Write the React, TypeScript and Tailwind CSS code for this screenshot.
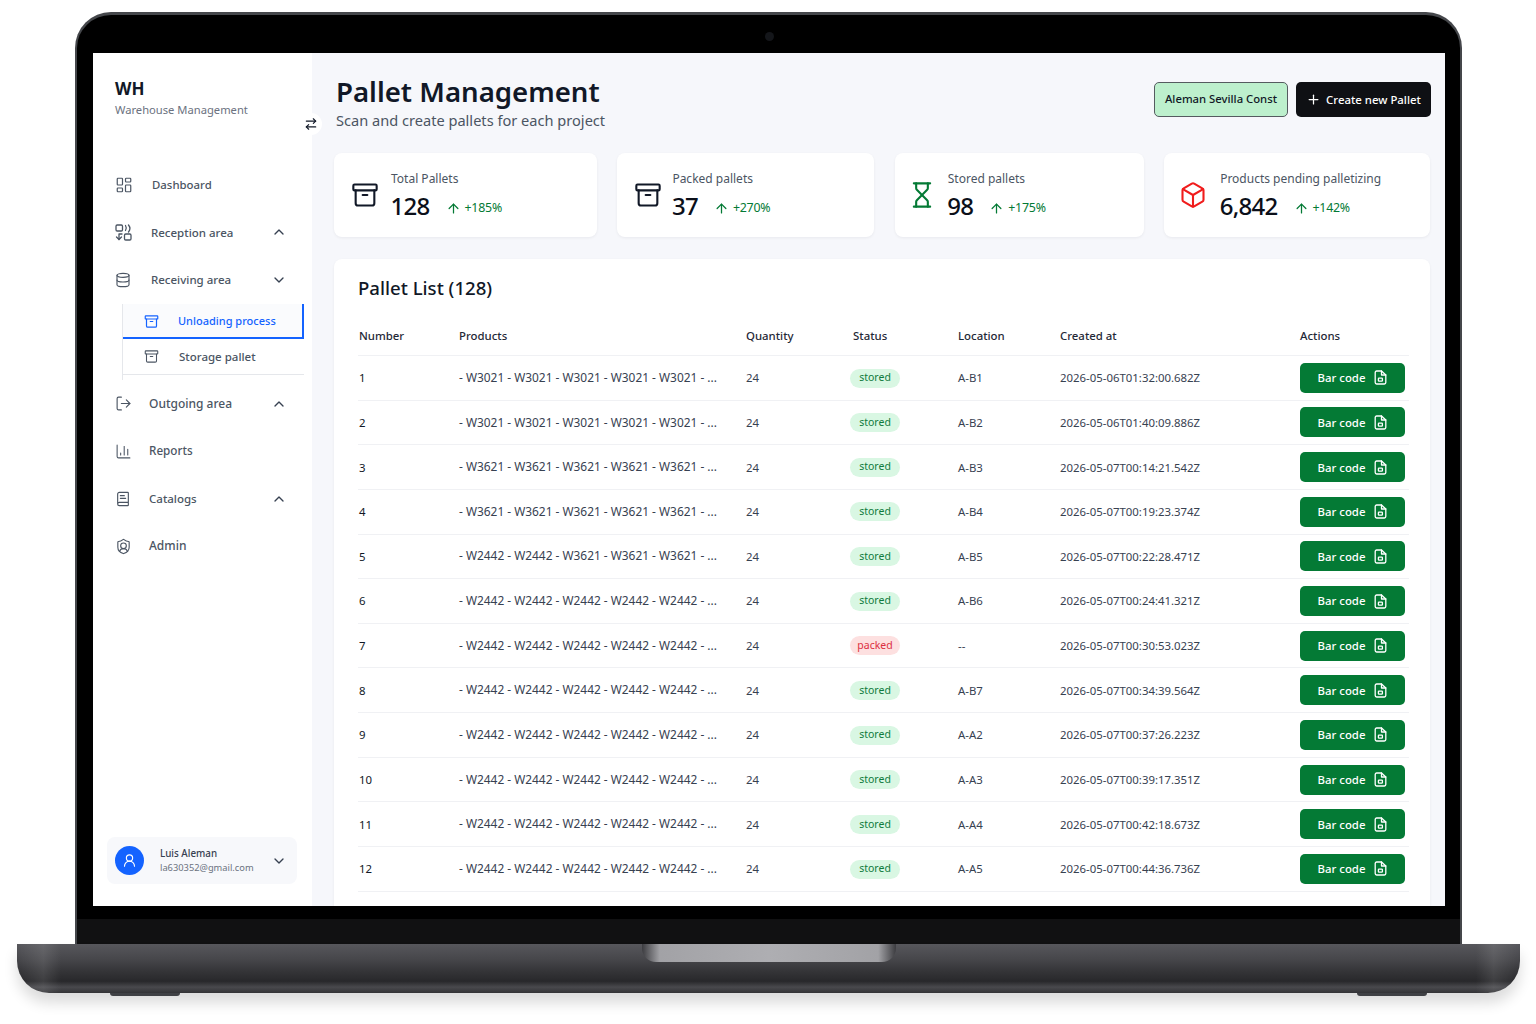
import {
  Archive,
  ArrowRightLeft,
  ArrowUp,
  BookText,
  Box,
  ChartColumn,
  ChevronDown,
  ChevronUp,
  Database,
  Hourglass,
  LayoutDashboard,
  LogOut,
  Plus,
  ShieldUser,
  UserRound,
} from "lucide-react";
import type { ReactNode } from "react";

type Pallet = {
  number: number;
  products: string;
  status: "stored" | "packed";
  location: string;
  createdAt: string;
};

const w3021 = "- W3021 - W3021 - W3021 - W3021 - W3021 - ...";
const w3621 = "- W3621 - W3621 - W3621 - W3621 - W3621 - ...";
const w2442 = "- W2442 - W2442 - W2442 - W2442 - W2442 - ...";

const pallets: Pallet[] = [
  { number: 1, products: w3021, status: "stored", location: "A-B1", createdAt: "2026-05-06T01:32:00.682Z" },
  { number: 2, products: w3021, status: "stored", location: "A-B2", createdAt: "2026-05-06T01:40:09.886Z" },
  { number: 3, products: w3621, status: "stored", location: "A-B3", createdAt: "2026-05-07T00:14:21.542Z" },
  { number: 4, products: w3621, status: "stored", location: "A-B4", createdAt: "2026-05-07T00:19:23.374Z" },
  { number: 5, products: "- W2442 - W2442 - W3621 - W3621 - W3621 - ...", status: "stored", location: "A-B5", createdAt: "2026-05-07T00:22:28.471Z" },
  { number: 6, products: w2442, status: "stored", location: "A-B6", createdAt: "2026-05-07T00:24:41.321Z" },
  { number: 7, products: w2442, status: "packed", location: "--", createdAt: "2026-05-07T00:30:53.023Z" },
  { number: 8, products: w2442, status: "stored", location: "A-B7", createdAt: "2026-05-07T00:34:39.564Z" },
  { number: 9, products: w2442, status: "stored", location: "A-A2", createdAt: "2026-05-07T00:37:26.223Z" },
  { number: 10, products: w2442, status: "stored", location: "A-A3", createdAt: "2026-05-07T00:39:17.351Z" },
  { number: 11, products: w2442, status: "stored", location: "A-A4", createdAt: "2026-05-07T00:42:18.673Z" },
  { number: 12, products: w2442, status: "stored", location: "A-A5", createdAt: "2026-05-07T00:44:36.736Z" },
];

const gridCols = "grid grid-cols-[101px_287px_107px_105px_102px_240px_1fr]";

function ReceptionIcon() {
  return (
    <svg width="17" height="17" viewBox="0 0 17 17" fill="none" stroke="currentColor" strokeWidth="1.3" strokeLinecap="round" strokeLinejoin="round">
      <rect x="1" y="1" width="6.5" height="6" rx="1.2" />
      <rect x="9.5" y="10" width="6.5" height="6" rx="1.2" />
      <path d="M10.5 1.5c1 1.6 1 3.4 0 5" />
      <path d="M13.5 1c1.7 2.2 1.7 5 0 7" />
      <path d="M7 10H4v5.5" />
      <path d="M1.5 13 4 15.5 6.5 13" />
    </svg>
  );
}

function BarcodeFileIcon() {
  return (
    <svg width="13" height="15" viewBox="0 0 13 15" fill="none" stroke="currentColor" strokeWidth="1.3" strokeLinecap="round" strokeLinejoin="round">
      <path d="M7.5 1H2.6A1.4 1.4 0 0 0 1.2 2.4v10.2A1.4 1.4 0 0 0 2.6 14h7.8a1.4 1.4 0 0 0 1.4-1.4V5Z" />
      <path d="M7.5 1v4h4.3" />
      <rect x="4.4" y="8.2" width="4" height="3" rx="0.6" />
    </svg>
  );
}

function NavItem({
  icon,
  label,
  textClass,
  chevron,
}: {
  icon: ReactNode;
  label: string;
  textClass: string;
  chevron?: "up" | "down";
}) {
  return (
    <div className="flex h-[47.5px] items-center pl-[22px] pr-[25px] text-[#4b5563]">
      <span className="flex w-[18px] justify-start">{icon}</span>
      <span className={`${textClass} flex-1 font-medium`}>{label}</span>
      {chevron === "up" && <ChevronUp size={16} strokeWidth={2} className="text-[#374151]" />}
      {chevron === "down" && <ChevronDown size={16} strokeWidth={2} className="text-[#374151]" />}
    </div>
  );
}

function Sidebar() {
  return (
    <aside className="relative flex w-[219px] shrink-0 flex-col bg-white">
      <div className="pl-[22px] pt-[26px]">
        <div className="text-[17px] font-bold leading-[20px] text-[#111827]">WH</div>
        <div className="mt-[1px] text-[11.2px] leading-[20px] text-[#6b7280]">Warehouse Management</div>
      </div>
      <div className="absolute right-[-10px] top-[60px] flex h-[22px] w-[22px] items-center justify-center rounded-full bg-white text-[#111827]">
        <ArrowRightLeft size={14} strokeWidth={2} />
      </div>

      {/* Nav */}
      <nav className="mt-[41px] flex flex-1 flex-col">
        <NavItem icon={<LayoutDashboard size={18} strokeWidth={1.6} />} label="Dashboard" textClass="ml-[19px] text-[11.4px]" />
        <NavItem icon={<ReceptionIcon />} label="Reception area" textClass="ml-[18px] text-[11.5px]" chevron="up" />
        <NavItem icon={<Database size={16} strokeWidth={1.7} />} label="Receiving area" textClass="ml-[18px] text-[11.5px]" chevron="down" />
        <div className="ml-[29px] mr-[8px] mt-[0.5px] border-l border-[#e5e7eb] pb-[5px]">
          <div className="flex h-[35px] items-center border-r-2 border-b-2 border-[#1463ff] bg-[#fafbfd] pl-[21px] pt-[2px] text-[#1463ff]">
            <Archive size={15} strokeWidth={1.9} />
            <span className="ml-[19px] text-[11px] font-medium">Unloading process</span>
          </div>
          <div className="flex h-[36px] items-center border-b border-[#e5e7eb] pl-[21px] text-[#4b5563]">
            <Archive size={15} strokeWidth={1.7} />
            <span className="ml-[20px] text-[11.5px] font-medium">Storage pallet</span>
          </div>
        </div>
        <NavItem icon={<LogOut size={17} strokeWidth={1.6} />} label="Outgoing area" textClass="ml-[16px] text-[12px]" chevron="up" />
        <NavItem icon={<ChartColumn size={17} strokeWidth={1.5} />} label="Reports" textClass="ml-[16px] text-[11.7px]" />
        <NavItem icon={<BookText size={16} strokeWidth={1.7} />} label="Catalogs" textClass="ml-[16px] text-[11.5px]" chevron="up" />
        <NavItem icon={<ShieldUser size={17} strokeWidth={1.6} />} label="Admin" textClass="ml-[16px] text-[12px]" />
      </nav>

      {/* User */}
      <div className="mb-[22px] ml-[14px] mr-[15px] flex h-[47px] items-center rounded-lg bg-[#f7f8fb] pl-[8px] pr-[10px]">
        <div className="flex h-[29px] w-[29px] items-center justify-center rounded-full bg-[#1463ff] text-white">
          <UserRound size={15} strokeWidth={1.8} />
        </div>
        <div className="ml-[16px] flex-1 pt-[1px]">
          <div className="text-[9.8px] font-medium leading-[14px] text-[#374151]">Luis Aleman</div>
          <div className="text-[9.3px] leading-[14px] text-[#6b7280]">la630352@gmail.com</div>
        </div>
        <ChevronDown size={16} strokeWidth={2} className="text-[#374151]" />
      </div>
    </aside>
  );
}

function StatCard({
  width,
  icon,
  label,
  value,
  change,
  iconBox,
}: {
  width: string;
  icon: ReactNode;
  label: string;
  value: string;
  change: string;
  iconBox: string;
}) {
  return (
    <div className={`${width} flex h-[84px] items-center rounded-lg bg-white pl-[17px] shadow-[0_1px_3px_rgba(17,24,39,0.06)]`}>
      <span className={`${iconBox} flex w-[28px] justify-center`}>{icon}</span>
      <div className="pt-[2px]">
        <div className="text-[12px] leading-[18px] text-[#4b5563]">{label}</div>
        <div className="mt-[2px] flex items-center">
          <span className="-ml-[0.5px] text-[24px] font-medium leading-[32px] tracking-[-0.03em] text-[#0b0f19]">{value}</span>
          <ArrowUp size={15} strokeWidth={2} className="ml-[16px] mt-[4px] text-[#047a35]" />
          <span className="ml-[4px] mt-[5px] text-[12.4px] tracking-[-0.02em] text-[#047a35]">{change}</span>
        </div>
      </div>
    </div>
  );
}

function PalletRow({ pallet }: { pallet: Pallet }) {
  const stored = pallet.status === "stored";
  return (
    <div className={`${gridCols} h-[44.65px] items-center border-b border-[#f0f1f4] text-[11.4px] text-[#374151]`}>
      <span className="pl-[1px] text-[#111827]">{pallet.number}</span>
      <span className="whitespace-nowrap text-[11.9px]">{pallet.products}</span>
      <span>24</span>
      <span>
        <span
          className={`-ml-[3px] inline-flex h-[19px] w-[50px] items-center justify-center rounded-full text-[10.5px] ${
            stored ? "bg-[#d9f7e3] text-[#0f7a3c]" : "bg-[#fde0e0] text-[#dc2f3f]"
          }`}
        >
          {pallet.status}
        </span>
      </span>
      <span>{pallet.location}</span>
      <span className="whitespace-nowrap">{pallet.createdAt}</span>
      <button className="flex h-[30px] w-[105px] items-center justify-center gap-[9px] rounded-[5px] bg-[#047a35] text-[11.4px] font-medium text-white">
        Bar code
        <BarcodeFileIcon />
      </button>
    </div>
  );
}

function PalletTable() {
  return (
    <section className="flex-1 rounded-t-lg bg-white pl-[24px] pr-[21px] shadow-[0_1px_3px_rgba(17,24,39,0.06)]">
      <h2 className="pt-[16px] text-[18.6px] font-medium leading-[26px] text-[#111827]">Pallet List (128)</h2>
      <div className={`${gridCols} mt-[26px] h-[29px] items-start border-b border-[#f0f1f4] text-[11.4px] font-medium leading-[18px] text-[#1f2937]`}>
        <span className="pl-[1px]">Number</span>
        <span>Products</span>
        <span>Quantity</span>
        <span>Status</span>
        <span>Location</span>
        <span>Created at</span>
        <span>Actions</span>
      </div>
      {pallets.map((pallet) => (
        <PalletRow key={pallet.number} pallet={pallet} />
      ))}
    </section>
  );
}

function Dashboard() {
  return (
    <div className="flex h-[853px] overflow-hidden bg-[#f6f7fb] font-['Noto_Sans',sans-serif]">
      <Sidebar />
      <main className="flex min-w-0 flex-1 flex-col pl-[22px] pr-[15px]">
        {/* Header */}
        <header className="flex h-[100px] items-start justify-between">
          <div className="pl-[2px] pt-[19px]">
            <h1 className="text-[27.6px] font-semibold leading-[38px] text-[#111827]">Pallet Management</h1>
            <p className="text-[14.6px] leading-[20px] text-[#4b5563]">Scan and create pallets for each project</p>
          </div>
          <div className="-mr-[1px] flex gap-[8px] pt-[29px]">
            <button className="h-[35px] w-[134px] rounded-[5px] border border-[#555b60] bg-[#bdf0cd] text-[11.3px] font-medium text-[#111827]">
              Aleman Sevilla Const
            </button>
            <button className="flex h-[35px] w-[135px] items-center justify-center gap-[5px] rounded-[5px] bg-[#0f1014] text-[11.4px] font-medium text-white">
              <Plus size={15} strokeWidth={2} />
              Create new Pallet
            </button>
          </div>
        </header>

        {/* Stats */}
        <div className="flex gap-[20.5px]">
          <StatCard width="w-[263px]" iconBox="mr-[12px]" icon={<Archive size={28} strokeWidth={1.8} className="text-[#111827]" />} label="Total Pallets" value="128" change="+185%" />
          <StatCard width="w-[257px]" iconBox="mr-[10px]" icon={<Archive size={28} strokeWidth={1.8} className="text-[#111827]" />} label="Packed pallets" value="37" change="+270%" />
          <StatCard width="w-[249px]" iconBox="-ml-[4px] mr-[12px]" icon={<Hourglass size={28} strokeWidth={1.8} className="text-[#047a35]" />} label="Stored pallets" value="98" change="+175%" />
          <StatCard width="w-[266px]" iconBox="-ml-[2px] mr-[13px]" icon={<Box size={28} strokeWidth={1.8} className="text-[#f01c1c]" />} label="Products pending palletizing" value="6,842" change="+142%" />
        </div>

        <div className="mt-[22px] flex flex-1">
          <PalletTable />
        </div>
      </main>
    </div>
  );
}

export default function App() {
  return (
    <div className="h-[1024px] w-[1536px] overflow-hidden bg-white pt-[12px]">
      {/* Lid */}
      <div className="relative ml-[75px] mr-[74px] h-[932px] rounded-t-[36px] border-x-[2px] border-t-[3px] border-[#45474b] bg-black pl-[16px] pr-[15px] pt-[38px]">
        <div className="absolute left-[688px] top-[17px] h-[9px] w-[9px] rounded-full bg-[#14161a]" />
        <Dashboard />
        <div className="-ml-[16px] -mr-[15px] mt-[13px] h-[25px] bg-[#111112]" />
      </div>

      {/* Base */}
      <div className="relative ml-[17px] mr-[16px] h-[49px] rounded-b-[32px] bg-[linear-gradient(180deg,#57575c_0%,#47474b_30%,#333336_58%,#28282b_76%,#49494d_88%,#333336_100%)] shadow-[0_10px_14px_rgba(0,0,0,0.14)]">
        <div className="absolute inset-y-0 left-0 w-[44px] rounded-bl-[32px] bg-[linear-gradient(90deg,transparent_0%,rgba(255,255,255,0.1)_60%,transparent_100%)]" />
        <div className="absolute inset-y-0 right-0 w-[44px] rounded-br-[32px] bg-[linear-gradient(90deg,transparent_0%,rgba(255,255,255,0.1)_40%,transparent_100%)]" />
        <div className="absolute left-1/2 top-0 h-[18px] w-[254px] -translate-x-1/2 rounded-b-[14px] bg-[linear-gradient(90deg,#3c3c40_0%,#a2a2a6_7%,#aeaeb2_50%,#a2a2a6_93%,#3c3c40_100%)]" />
        <div className="absolute left-[93px] top-[49px] h-[3px] w-[70px] rounded-b bg-[#3f4044]" />
        <div className="absolute right-[93px] top-[49px] h-[3px] w-[70px] rounded-b bg-[#3f4044]" />
      </div>
    </div>
  );
}
